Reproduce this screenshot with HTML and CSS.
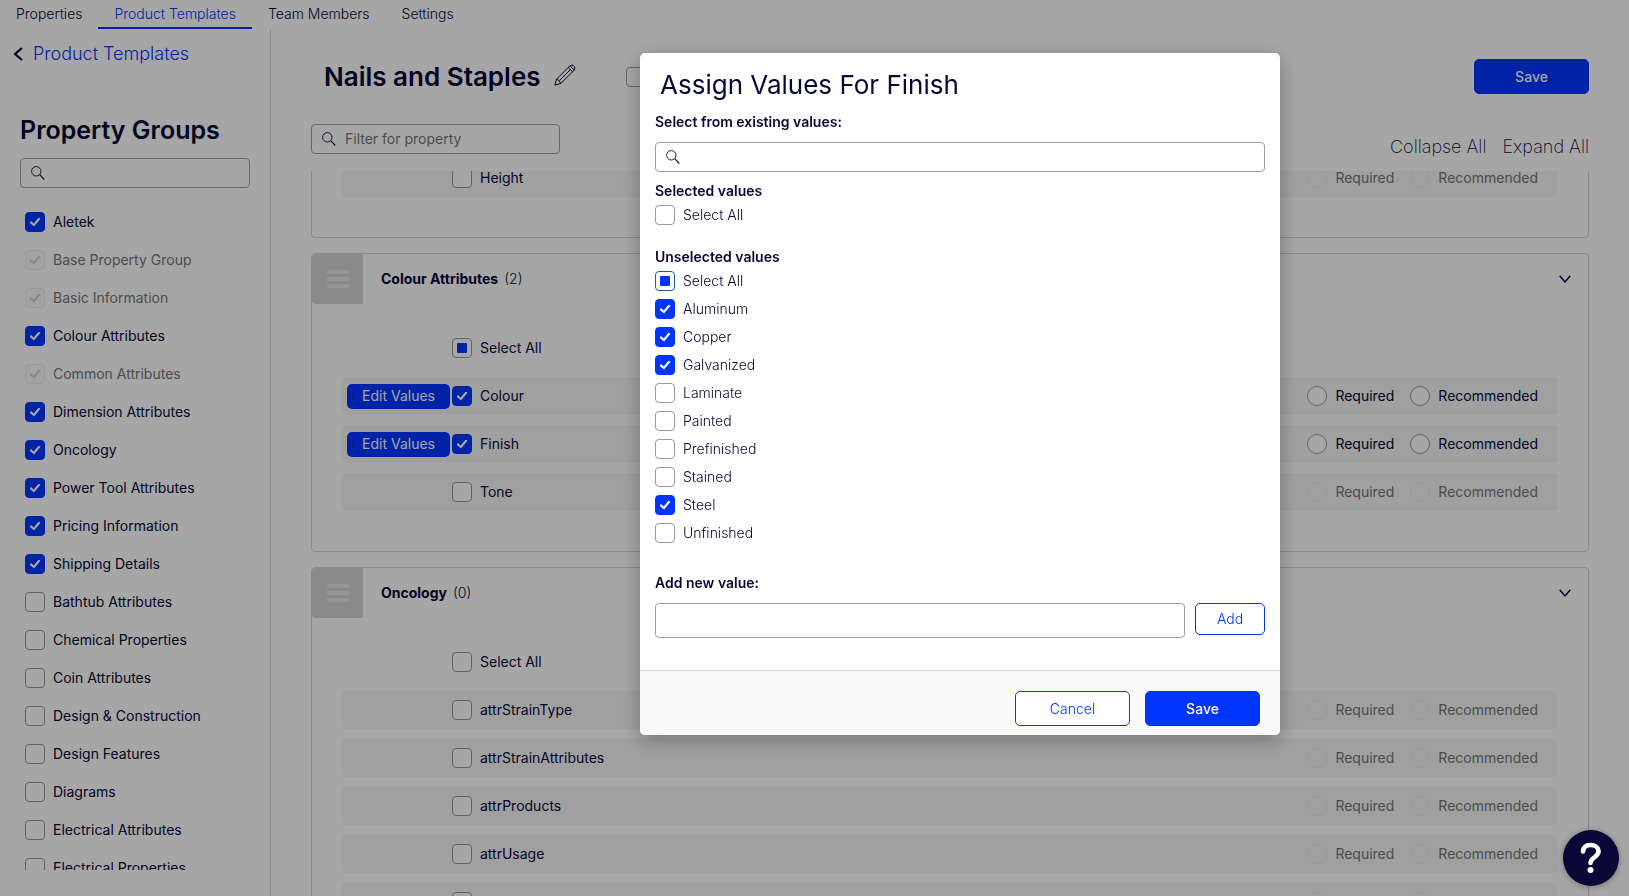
FILE: index.html
```html
<!DOCTYPE html>
<html lang="en">
<head>
    <meta charset="UTF-8">
    <meta name="viewport" content="width=device-width, initial-scale=1.0">
    <title>Product Templates - Nails and Staples</title>
    <link rel="stylesheet" href="styles.css">
</head>
<body>
    <svg class="sprite" aria-hidden="true">
        <symbol id="icon-search" viewBox="0 0 14 14">
            <circle cx="5.3" cy="5.3" r="4.7" fill="none" stroke="currentColor" stroke-width=".9"/>
            <path d="M8.7 8.7l4.6 4.8" fill="none" stroke="currentColor" stroke-width="1.1"/>
        </symbol>
        <symbol id="icon-chevron" viewBox="0 0 12 8">
            <path d="M.7 .7L6 6.9L11.3 .7" fill="none" stroke="currentColor" stroke-width="1.5"/>
        </symbol>
    </svg>

    <nav class="tabs">
        <a href="#">Properties</a>
        <a href="#" class="active">Product Templates</a>
        <a href="#">Team Members</a>
        <a href="#">Settings</a>
    </nav>

    <div class="page">
        <aside class="sidebar">
            <a href="#" class="back-link">
                <svg width="10" height="14" viewBox="0 0 10 14"><path d="M9 1L2 7l7 6" fill="none" stroke="currentColor" stroke-width="2.2"/></svg>
                <span>Product Templates</span>
            </a>
            <h2>Property Groups</h2>
            <div class="search-box">
                <svg width="14" height="14"><use href="#icon-search"/></svg>
                <input type="text" aria-label="Search property groups">
            </div>
            <div class="group-list">
                <label class="check"><input type="checkbox" checked>Aletek</label>
                <label class="check disabled"><input type="checkbox" checked disabled>Base Property Group</label>
                <label class="check disabled"><input type="checkbox" checked disabled>Basic Information</label>
                <label class="check"><input type="checkbox" checked>Colour Attributes</label>
                <label class="check disabled"><input type="checkbox" checked disabled>Common Attributes</label>
                <label class="check"><input type="checkbox" checked>Dimension Attributes</label>
                <label class="check"><input type="checkbox" checked>Oncology</label>
                <label class="check"><input type="checkbox" checked>Power Tool Attributes</label>
                <label class="check"><input type="checkbox" checked>Pricing Information</label>
                <label class="check"><input type="checkbox" checked>Shipping Details</label>
                <label class="check"><input type="checkbox">Bathtub Attributes</label>
                <label class="check"><input type="checkbox">Chemical Properties</label>
                <label class="check"><input type="checkbox">Coin Attributes</label>
                <label class="check"><input type="checkbox">Design &amp; Construction</label>
                <label class="check"><input type="checkbox">Design Features</label>
                <label class="check"><input type="checkbox">Diagrams</label>
                <label class="check"><input type="checkbox">Electrical Attributes</label>
                <label class="check"><input type="checkbox">Electrical Properties</label>
            </div>
        </aside>

        <main class="content">
            <div class="title-bar">
                <h1>Nails and Staples</h1>
                <button class="icon-btn" aria-label="Edit name">
                    <svg width="22" height="22" viewBox="0 0 22 22" fill="none" stroke="currentColor" stroke-width="1" stroke-linejoin="round">
                        <path d="M.9 21.1L2.5 15.2L15.9 1.8Q17.8 .2 19.6 1.8L20.3 2.500Q21.800 4.400 20.200 6.100L6.800 19.500Z"/>
                        <path d="M2.500 15.200Q5.500 15.500 6.800 19.500M5.500 16.500L16.800 5.200M14.200 3.500L18.500 7.800M15.900 1.800L20.200 6.100"/>
                    </svg>
                </button>
                <input type="checkbox" class="title-check" aria-label="Active">
                <button class="btn btn-primary">Save</button>
            </div>
            <div class="filter-bar">
                <div class="search-box">
                    <svg width="14" height="14"><use href="#icon-search"/></svg>
                    <input type="text" placeholder="Filter for property" aria-label="Filter for property">
                </div>
                <div class="expand-links">
                    <a href="#">Collapse All</a>
                    <a href="#">Expand All</a>
                </div>
            </div>

            <div class="cards">
                <section class="card card-scrolled">
                    <div class="row">
                        <label class="check"><input type="checkbox">Height</label>
                        <label class="check disabled"><input type="radio" name="height" disabled>Required</label>
                        <label class="check disabled"><input type="radio" name="height" disabled>Recommended</label>
                    </div>
                </section>

                <section class="card">
                    <header class="card-header">
                        <span class="handle"><i></i><i></i><i></i></span>
                        <h3>Colour Attributes</h3>
                        <span class="count">(2)</span>
                        <button class="icon-btn" aria-label="Collapse"><svg width="12" height="8"><use href="#icon-chevron"/></svg></button>
                    </header>
                    <div class="select-all">
                        <label class="check"><input type="checkbox" class="partial">Select All</label>
                    </div>
                    <div class="row">
                        <button class="btn-edit">Edit Values</button>
                        <label class="check"><input type="checkbox" checked>Colour</label>
                        <label class="check"><input type="radio" name="colour">Required</label>
                        <label class="check"><input type="radio" name="colour">Recommended</label>
                    </div>
                    <div class="row">
                        <button class="btn-edit">Edit Values</button>
                        <label class="check"><input type="checkbox" checked>Finish</label>
                        <label class="check"><input type="radio" name="finish">Required</label>
                        <label class="check"><input type="radio" name="finish">Recommended</label>
                    </div>
                    <div class="row">
                        <label class="check"><input type="checkbox">Tone</label>
                        <label class="check disabled"><input type="radio" name="tone" disabled>Required</label>
                        <label class="check disabled"><input type="radio" name="tone" disabled>Recommended</label>
                    </div>
                </section>

                <section class="card">
                    <header class="card-header">
                        <span class="handle"><i></i><i></i><i></i></span>
                        <h3>Oncology</h3>
                        <span class="count">(0)</span>
                        <button class="icon-btn" aria-label="Collapse"><svg width="12" height="8"><use href="#icon-chevron"/></svg></button>
                    </header>
                    <div class="select-all">
                        <label class="check"><input type="checkbox">Select All</label>
                    </div>
                    <div class="row">
                        <label class="check"><input type="checkbox">attrStrainType</label>
                        <label class="check disabled"><input type="radio" name="strain-type" disabled>Required</label>
                        <label class="check disabled"><input type="radio" name="strain-type" disabled>Recommended</label>
                    </div>
                    <div class="row">
                        <label class="check"><input type="checkbox">attrStrainAttributes</label>
                        <label class="check disabled"><input type="radio" name="strain-attributes" disabled>Required</label>
                        <label class="check disabled"><input type="radio" name="strain-attributes" disabled>Recommended</label>
                    </div>
                    <div class="row">
                        <label class="check"><input type="checkbox">attrProducts</label>
                        <label class="check disabled"><input type="radio" name="products" disabled>Required</label>
                        <label class="check disabled"><input type="radio" name="products" disabled>Recommended</label>
                    </div>
                    <div class="row">
                        <label class="check"><input type="checkbox">attrUsage</label>
                        <label class="check disabled"><input type="radio" name="usage" disabled>Required</label>
                        <label class="check disabled"><input type="radio" name="usage" disabled>Recommended</label>
                    </div>
                    <div class="row">
                        <label class="check"><input type="checkbox" aria-label="Attribute"></label>
                        <label class="check disabled"><input type="radio" name="other" disabled>Required</label>
                        <label class="check disabled"><input type="radio" name="other" disabled>Recommended</label>
                    </div>
                </section>
            </div>
        </main>
    </div>

    <div class="overlay">
        <div class="modal" role="dialog" aria-labelledby="modal-title">
            <div class="modal-body">
                <h2 id="modal-title">Assign Values For Finish</h2>
                <label class="field-label" for="value-search">Select from existing values:</label>
                <div class="search-box">
                    <svg width="14" height="14"><use href="#icon-search"/></svg>
                    <input type="text" id="value-search">
                </div>

                <h4>Selected values</h4>
                <div class="value-list">
                    <label class="check"><input type="checkbox">Select All</label>
                </div>

                <h4>Unselected values</h4>
                <div class="value-list">
                    <label class="check"><input type="checkbox" class="partial focused">Select All</label>
                    <label class="check"><input type="checkbox" checked>Aluminum</label>
                    <label class="check"><input type="checkbox" checked>Copper</label>
                    <label class="check"><input type="checkbox" checked>Galvanized</label>
                    <label class="check"><input type="checkbox">Laminate</label>
                    <label class="check"><input type="checkbox">Painted</label>
                    <label class="check"><input type="checkbox">Prefinished</label>
                    <label class="check"><input type="checkbox">Stained</label>
                    <label class="check"><input type="checkbox" checked>Steel</label>
                    <label class="check"><input type="checkbox">Unfinished</label>
                </div>

                <label class="field-label" for="new-value">Add new value:</label>
                <div class="add-row">
                    <input type="text" id="new-value">
                    <button class="btn btn-outline btn-add">Add</button>
                </div>
            </div>
            <footer class="modal-footer">
                <button class="btn btn-outline">Cancel</button>
                <button class="btn btn-primary">Save</button>
            </footer>
        </div>
    </div>

    <button class="help" aria-label="Help">
        <svg width="22" height="32" viewBox="0 0 22 32">
            <path d="M3 9.5C3.5 5 6.5 3 10.5 3C15 3 18.5 5.5 18.5 9.5C18.5 15 10.5 15.5 10.5 21" fill="none" stroke="#fff" stroke-width="4.6" stroke-linecap="round"/>
            <circle cx="10.5" cy="28" r="3" fill="#fff"/>
        </svg>
    </button>
</body>
</html>
```
FILE: styles.css
```css
* {
    box-sizing: border-box;
}

body {
    margin: 0;
    height: 100vh;
    overflow: hidden;
    display: flex;
    flex-direction: column;
    font-family: Inter, "Liberation Sans", sans-serif;
    font-size: 14px;
    line-height: 20px;
    color: #090736;
    background: #fff;
}

h1, h2, h3, h4 {
    margin: 0;
}

a {
    color: inherit;
    text-decoration: none;
}

button, input {
    font: inherit;
    color: inherit;
}

button {
    padding: 0;
    border: 0;
    background: none;
}

.sprite {
    position: absolute;
    width: 0;
    height: 0;
}

/* top navigation */
.tabs {
    display: flex;
    height: 29px;
    flex-shrink: 0;
}

.tabs a {
    padding: 4px 16px 0;
    border-bottom: 2px solid transparent;
    font-weight: 300;
}

.tabs .active {
    color: #0035ff;
    border-color: #0035ff;
}

.page {
    display: flex;
    flex: 1;
    min-height: 0;
}

/* sidebar */
.sidebar {
    width: 271px;
    flex-shrink: 0;
    display: flex;
    flex-direction: column;
    padding: 13px 20px 26px;
    border-right: 1px solid #d4d4d4;
}

.back-link {
    display: flex;
    align-items: center;
    gap: 10px;
    margin-left: -7px;
    font-size: 18px;
    line-height: 24px;
    font-weight: 300;
}

.back-link span {
    color: #0035ff;
}

.sidebar h2 {
    margin: 48px 0 12px;
    font-size: 25px;
    line-height: 32px;
    font-weight: 600;
}

.group-list {
    display: flex;
    flex-direction: column;
    gap: 18px;
    flex: 1;
    min-height: 0;
    margin-top: 24px;
    padding-left: 5px;
    overflow: hidden;
}

/* form controls */
.search-box {
    display: flex;
    align-items: center;
    gap: 9px;
    height: 30px;
    flex-shrink: 0;
    padding: 0 10px;
    border: 1px solid #a0a0a0;
    border-radius: 4px;
}

.search-box input {
    flex: 1;
    min-width: 0;
    padding: 0;
    border: 0;
    outline: 0;
    background: none;
}

.search-box input::placeholder {
    color: #757575;
}

.check {
    display: flex;
    align-items: center;
    gap: 8px;
    flex-shrink: 0;
}

.disabled {
    color: #757575;
}

input[type="checkbox"],
input[type="radio"] {
    appearance: none;
    display: grid;
    place-items: center;
    width: 20px;
    height: 20px;
    flex-shrink: 0;
    margin: 0;
    border: 1px solid #999;
    border-radius: 4px;
    background: #fff;
}

input[type="radio"] {
    border-radius: 50%;
}

input[type="checkbox"]:checked {
    border-color: #0035ff;
    background: #0035ff;
}

input[type="checkbox"]:checked::before {
    content: "";
    width: 11px;
    height: 9px;
    background: #fff;
    clip-path: path("M0 5.2L1.5 3.6L4.2 6.1L9.2 0L11 1.3L4.6 9Z");
}

input[type="checkbox"]:disabled,
input[type="radio"]:disabled {
    border-color: #ececec;
    background: #fafafa;
}

.row input[type="radio"]:disabled {
    background: none;
}

input[type="checkbox"]:disabled::before {
    background: #d0d0d0;
}

.partial::before {
    content: "";
    width: 10px;
    height: 10px;
    border-radius: 1px;
    background: #0035ff;
}

input.focused {
    border-color: #1a5a96;
}

/* buttons */
.btn {
    width: 115px;
    height: 35px;
    border: 1px solid #0035ff;
    border-radius: 5px;
}

.btn-primary {
    background: #0035ff;
    color: #fff;
    font-weight: 500;
}

.btn-outline {
    background: #fff;
    color: #0035ff;
    font-weight: 300;
}

.btn-add {
    width: 70px;
    height: 32px;
}

.btn-edit {
    width: 103px;
    height: 25px;
    border-radius: 5px;
    background: #0035ff;
    color: #fff;
}

.icon-btn {
    display: flex;
}

/* main content */
.content {
    flex: 1;
    min-width: 0;
    display: flex;
    flex-direction: column;
    padding: 30px 40px 0;
}

.title-bar {
    display: flex;
    align-items: center;
    height: 35px;
    padding-left: 13px;
}

.title-bar h1 {
    font-size: 26px;
    line-height: 32px;
    font-weight: 600;
}

.title-bar .icon-btn {
    margin: 0 50px 4px 13px;
}

.title-bar .btn {
    margin-left: auto;
}

.filter-bar {
    display: flex;
    justify-content: space-between;
    height: 47px;
    margin-top: 30px;
}

.filter-bar .search-box {
    width: 249px;
}

.expand-links {
    display: flex;
    gap: 16px;
    padding-top: 11px;
    font-size: 18px;
    line-height: 24px;
    font-weight: 200;
}

.cards {
    flex: 1;
    min-height: 0;
    overflow: hidden;
    display: flex;
    flex-direction: column;
    gap: 15px;
}

.card {
    flex-shrink: 0;
    padding-bottom: 40px;
    border: 1px solid #d4d4d4;
    border-radius: 4px;
}

.card-scrolled {
    margin-top: -12px;
    border-top: 0;
}

.card-header {
    display: flex;
    align-items: center;
    height: 50px;
    padding-right: 17px;
}

.card-header h3 {
    margin: 0 6px 0 18px;
    font-size: 14px;
    font-weight: 700;
}

.card-header .icon-btn {
    margin-left: auto;
}

.count {
    font-weight: 300;
}

.handle {
    display: flex;
    flex-direction: column;
    align-items: center;
    justify-content: center;
    gap: 3px;
    width: 51px;
    height: 50px;
    border-radius: 4px 0 0 4px;
    background: #d4d4d4;
}

.handle i {
    width: 22px;
    height: 4px;
    border-radius: 2px;
    background: #e9e9e9;
}

.select-all {
    padding: 34px 0 19px 140px;
}

.row {
    display: flex;
    align-items: center;
    gap: 16px;
    height: 38px;
    margin: 0 30px 10px;
    padding: 0 20px 0 110px;
    border-radius: 5px;
    background: #f6f6f6;
}

.row:last-child {
    margin-bottom: 0;
}

.row .check:has([type="checkbox"]) {
    margin-right: auto;
}

/* the edit button takes the empty space left of the tick box */
.row .btn-edit {
    margin: 0 -14px 0 -105px;
}

/* modal */
.overlay {
    position: fixed;
    inset: 0;
    background: rgba(0, 0, 0, 0.35);
}

.modal {
    position: absolute;
    top: 53px;
    left: 640px;
    width: 640px;
    border-radius: 5px;
    overflow: hidden;
    background: #fff;
    box-shadow: 0 5px 20px rgba(0, 0, 0, 0.3);
}

.modal-body {
    display: flex;
    flex-direction: column;
    padding: 16px 15px 32px;
}

.modal h2 {
    margin: 0 0 11px 5px;
    font-size: 26px;
    line-height: 32px;
    font-weight: 400;
}

.field-label, .modal h4 {
    font-size: 14px;
    line-height: 20px;
    font-weight: 600;
}

.modal .check {
    font-weight: 300;
}

.modal .search-box {
    margin: 10px 0 9px;
}

.value-list {
    display: flex;
    flex-direction: column;
    gap: 8px;
    margin: 4px 0 22px;
}

.value-list + .field-label {
    margin: 8px 0 10px;
}

.add-row {
    display: flex;
    gap: 10px;
}

.add-row input {
    flex: 1;
    height: 35px;
    padding: 0 10px;
    border: 1px solid #a0a0a0;
    border-radius: 4px;
}

.modal-footer {
    display: flex;
    justify-content: flex-end;
    gap: 15px;
    padding: 20px 20px 9px;
    border-top: 1px solid #d4d4d4;
    background: #fafafa;
}

.help {
    position: fixed;
    right: 10px;
    bottom: 10px;
    display: flex;
    align-items: center;
    justify-content: center;
    width: 56px;
    height: 56px;
    border-radius: 50%;
    background: #090736;
    box-shadow: 0 1px 6px rgba(0, 0, 0, 0.3);
}
```
